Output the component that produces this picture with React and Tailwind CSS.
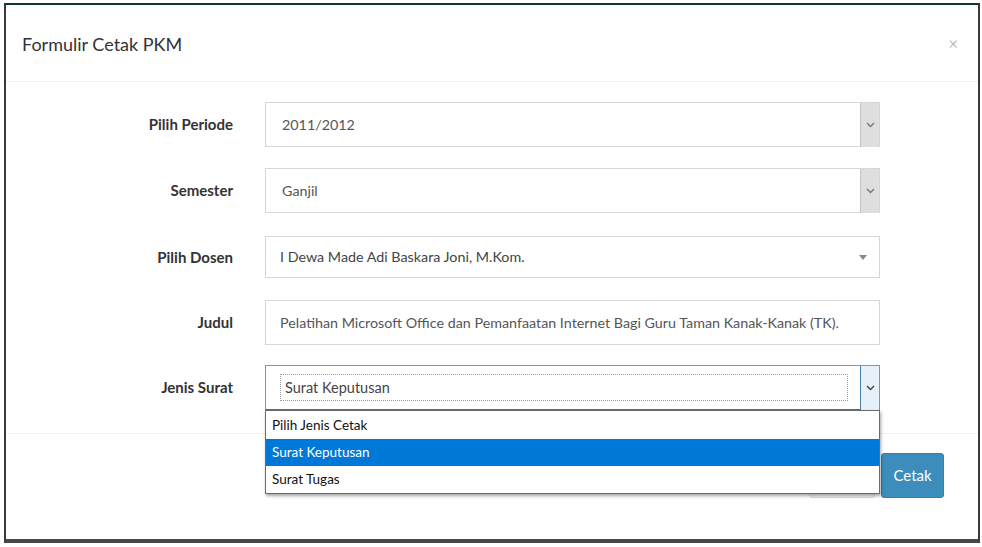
import React from 'react';

const font = { fontFamily: '"Lato", "Open Sans", sans-serif' };

const Chevron = ({ className = '' }) => (
    <svg width="9" height="6" viewBox="0 0 9 6" className={className}>
        <path d="M1 1 L4.5 4.5 L8 1" fill="none" stroke="currentColor" strokeWidth="1.4" />
    </svg>
);

const Row = ({ label, children, mt = 'mt-0' }) => (
    <div className={`flex items-center ${mt}`}>
        <label className="w-[227px] text-right text-[15px] font-bold text-[#333]">{label}</label>
        <div className="ml-[32px] w-[615px] relative">{children}</div>
    </div>
);

const NativeSelect = ({ value }) => (
    <div className="h-[45px] border border-[#d2d6de] bg-white flex items-center">
        <span className="flex-1 pl-[16px] text-[14.3px] text-[#555]">{value}</span>
        <div className="w-[19px] h-[44px] bg-[#dedede] border-l border-[#c4c4c4] flex items-center justify-center text-[#777]">
            <Chevron />
        </div>
    </div>
);

export default function App() {
    return (
        <div className="w-[982px] h-[547px] bg-white pt-[3px] pl-[4px]" style={font}>
            <div className="w-[976px] h-[540px] border-t-[2px] border-t-[#0d3a2c] border-l-[2px] border-l-[#3a3a3a] border-r-[2px] border-r-[#3a3a3a] border-b-[4px] border-b-[#474747] bg-white flex flex-col">
                <div className="h-[77px] border-b border-[#f0f0f0] flex items-center justify-between pl-[16px] pr-[20px]">
                    <h4 className="text-[18px] text-[#333] pt-[3px]">Formulir Cetak PKM</h4>
                    <span className="text-[17px] text-[#bdbdbd] leading-none">×</span>
                </div>
                <div className="pt-[20px] relative">
                    <Row label="Pilih Periode">
                        <NativeSelect value="2011/2012" />
                    </Row>
                    <Row label="Semester" mt="mt-[21px]">
                        <NativeSelect value="Ganjil" />
                    </Row>
                    <Row label="Pilih Dosen" mt="mt-[23px]">
                        <div className="h-[42px] border border-[#d2d6de] bg-white flex items-center pl-[14px] pr-[12px]">
                            <span className="flex-1 text-[14.3px] text-[#444]">I Dewa Made Adi Baskara Joni, M.Kom.</span>
                            <svg width="8" height="5" viewBox="0 0 8 5"><path d="M0 0 H8 L4 5 Z" fill="#888" /></svg>
                        </div>
                    </Row>
                    <Row label="Judul" mt="mt-[22px]">
                        <div className="h-[45px] border border-[#d2d6de] bg-white flex items-center pl-[14px]">
                            <span className="text-[14.3px] text-[#555] whitespace-nowrap">Pelatihan Microsoft Office dan Pemanfaatan Internet Bagi Guru Taman Kanak-Kanak (TK).</span>
                        </div>
                    </Row>
                    <Row label="Jenis Surat" mt="mt-[20px]">
                        <div className="h-[45px] border border-[#7a9aa8] border-b-[#6a6a6a] bg-white flex items-center pl-[14px]">
                            <div className="w-[568px] h-[27px] border border-dotted border-[#9a9a9a] flex items-center pl-[4px]">
                                <span className="text-[14.5px] text-[#444]">Surat Keputusan</span>
                            </div>
                            <div className="ml-auto w-[19px] h-[44px] bg-[#e6f0f8] border-l border-[#4a7fb0] flex items-center justify-center text-[#444]">
                                <Chevron />
                            </div>
                        </div>
                        <div className="absolute z-10 left-0 top-[45px] w-[615px] bg-white border border-[#6b6b6b] shadow-[1px_2px_3px_rgba(0,0,0,0.35)] text-[13.5px] text-[#111]">
                            <div className="h-[28px] flex items-center pl-[6px]">Pilih Jenis Cetak</div>
                            <div className="h-[27px] flex items-center pl-[6px] bg-[#0078d7] text-white">Surat Keputusan</div>
                            <div className="h-[27px] flex items-center pl-[6px]">Surat Tugas</div>
                        </div>
                    </Row>
                </div>
                <div className="mt-[23px] border-t border-[#f2f2f2] flex justify-end items-start pt-[19px] pr-[34px] gap-[6px]">
                    <button className="h-[45px] w-[66px] rounded-[3px] border border-[#ddd] bg-[#f4f4f4] text-[15px] text-[#444]">Batal</button>
                    <button className="h-[45px] w-[63px] rounded-[3px] border border-[#367fa9] bg-[#3c8dbc] text-[15px] text-white">Cetak</button>
                </div>
            </div>
        </div>
    );
}
